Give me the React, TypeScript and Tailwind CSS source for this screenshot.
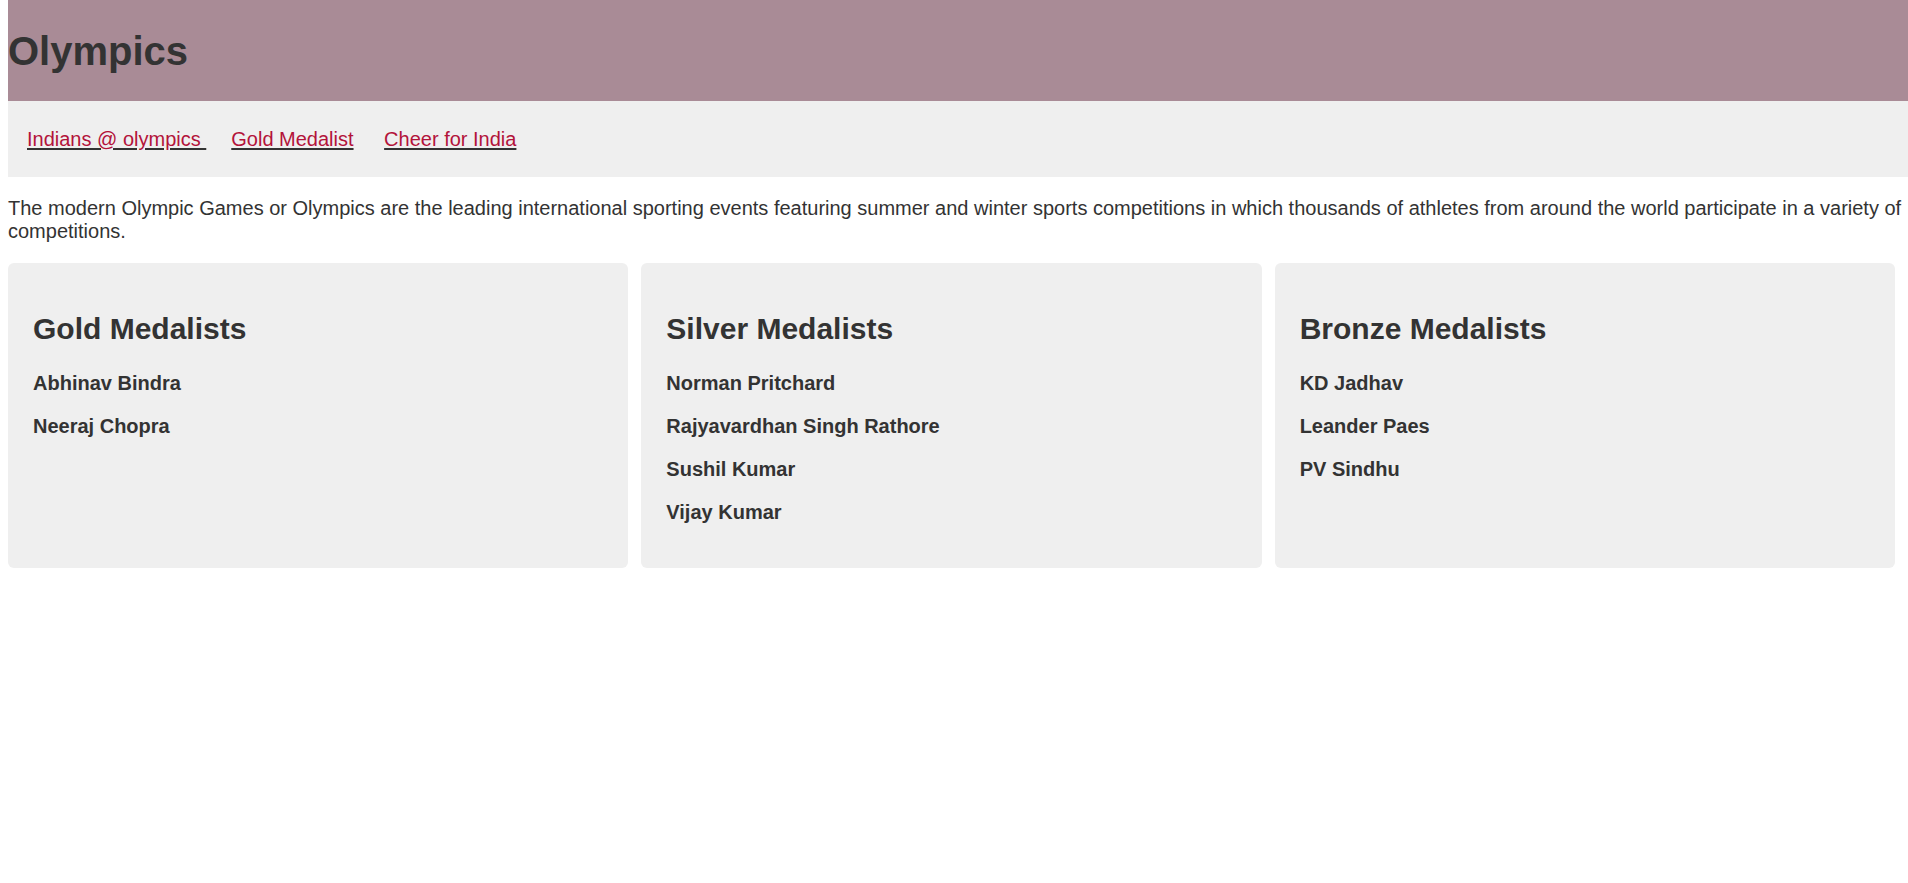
import React from 'react';

const medals = [
  { title: 'Gold Medalists', names: ['Abhinav Bindra', 'Neeraj Chopra'] },
  { title: 'Silver Medalists', names: ['Norman Pritchard', 'Rajyavardhan Singh Rathore', 'Sushil Kumar', 'Vijay Kumar'] },
  { title: 'Bronze Medalists', names: ['KD Jadhav', 'Leander Paes', 'PV Sindhu'] },
];

const links = ['Indians @ olympics ', 'Gold Medalist', 'Cheer for India'];

function App() {
  return (
    <div className="pl-2 text-[#333] text-[20px] leading-[23px] bg-white min-h-screen" style={{ fontFamily: '"Liberation Sans", Arial, sans-serif' }}>
      <header className="h-[101px] flex items-center bg-[#a98b96]">
        <h1 className="text-[40px] leading-[46px] font-bold">Olympics</h1>
      </header>

      <nav className="h-[76px] flex items-center pl-[6.5px] bg-[#efefef]">
        <div>
          {links.map((link, i) => (
            <React.Fragment key={link}>
              {i > 0 && ' '}
              <a href="#" className="mx-[12.5px] text-[#b3133a] underline decoration-[#333] underline-offset-[2px]">
                {link}
              </a>
            </React.Fragment>
          ))}
        </div>
      </nav>

      <p className="mt-5">
        The modern Olympic Games or Olympics are the leading international sporting events featuring summer and winter sports competitions in which thousands of athletes from around the world participate in a variety of competitions.
      </p>

      <div className="mt-5 pr-[13px] grid grid-cols-3 gap-[13px]">
        {medals.map((m) => (
          <div key={m.title} className="bg-[#efefef] rounded-md px-[25px] pt-[49px] pb-[44px]">
            <h2 className="text-[30px] leading-[34.5px] font-bold mb-[25px]">{m.title}</h2>
            <div className="flex flex-col gap-[20px]">
              {m.names.map((n) => (
                <p key={n} className="font-bold">{n}</p>
              ))}
            </div>
          </div>
        ))}
      </div>
    </div>
  );
}

export default App;
